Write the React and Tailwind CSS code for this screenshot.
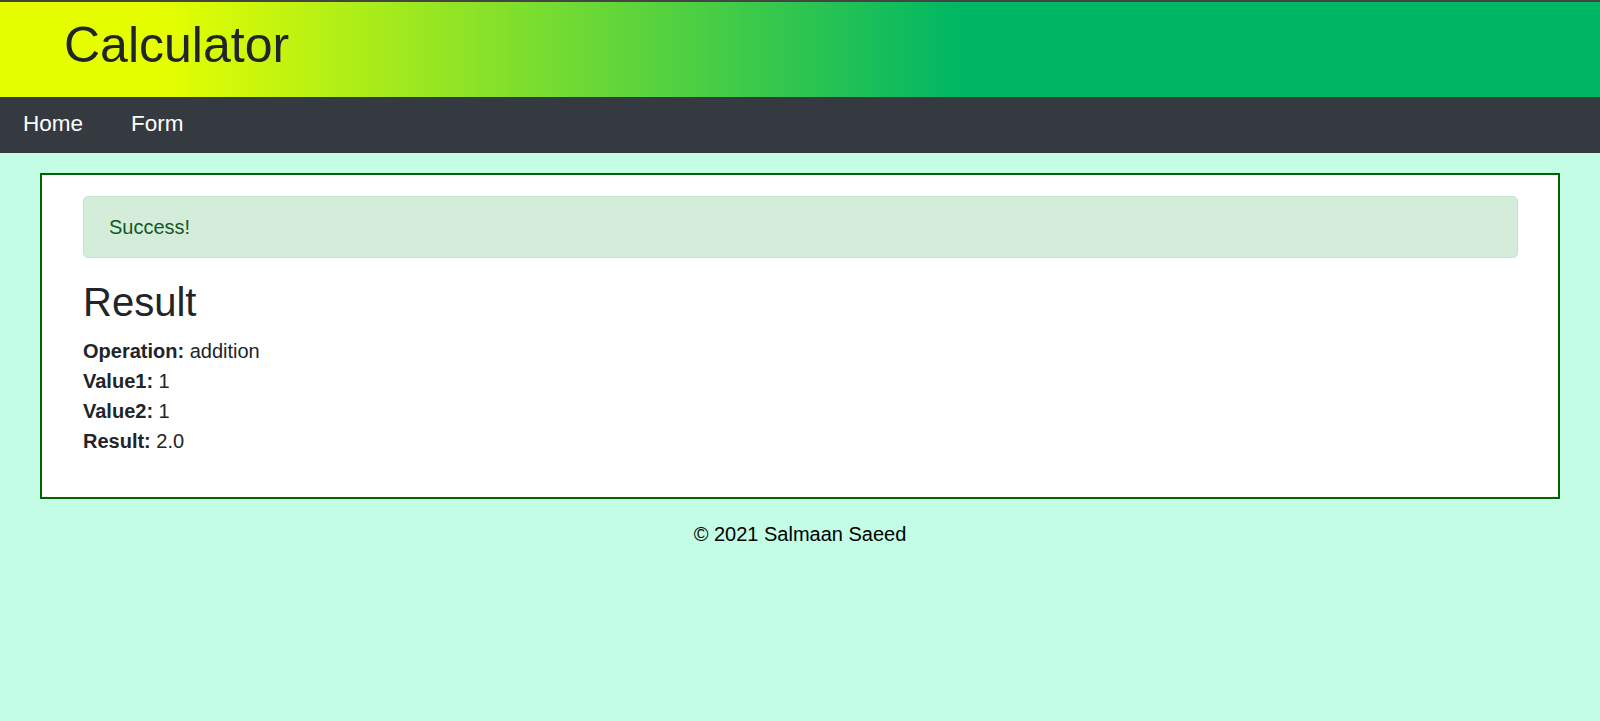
import React from 'react';

const rows = [
    ['Operation:', 'addition'],
    ['Value1:', '1'],
    ['Value2:', '1'],
    ['Result:', '2.0'],
];

const App = () => {
    return (
        <div className="min-h-screen bg-[#c3fde6] font-['Liberation_Sans',Arial,sans-serif]">
            {/* Header */}
            <div className="h-[97px] border-t-2 border-[#444444] bg-linear-to-r/srgb from-[#e6ff00] from-10% to-[#00b764] to-60% pl-[64px] pt-[13px]">
                <h1 className="text-[50px] leading-[60px] font-normal text-[#212529]">Calculator</h1>
            </div>

            {/* Nav */}
            <nav className="flex h-[56px] items-center gap-[48px] bg-[#343a40] pl-[23px] pb-[4px]">
                <a className="text-[22.5px] leading-[33px] text-white">Home</a>
                <a className="text-[22.5px] leading-[33px] text-white">Form</a>
            </nav>

            {/* Result card */}
            <div className="mx-[40px] mt-[20px] border-2 border-[#006400] bg-white pl-[41px] pr-[40px] pt-[21px] pb-[41px]">
                <div className="mb-[20px] rounded-[5px] border border-[#c3e6cb] bg-[#d4edda] px-[25px] py-[15px] text-[20px] leading-[30px] text-[#155724]">
                    Success!
                </div>
                <h2 className="mb-[10px] text-[40px] leading-[48px] font-normal text-[#212529]">Result</h2>
                <div className="text-[20px] leading-[30px] text-[#212529]">
                    {rows.map(([label, value]) => (
                        <div key={label}>
                            <b className="font-bold">{label}</b> {value}
                        </div>
                    ))}
                </div>
            </div>

            {/* Footer */}
            <footer className="mt-[20px] text-center text-[20px] leading-[30px] text-black">
                © 2021 Salmaan Saeed
            </footer>
        </div>
    );
};

export default App;
